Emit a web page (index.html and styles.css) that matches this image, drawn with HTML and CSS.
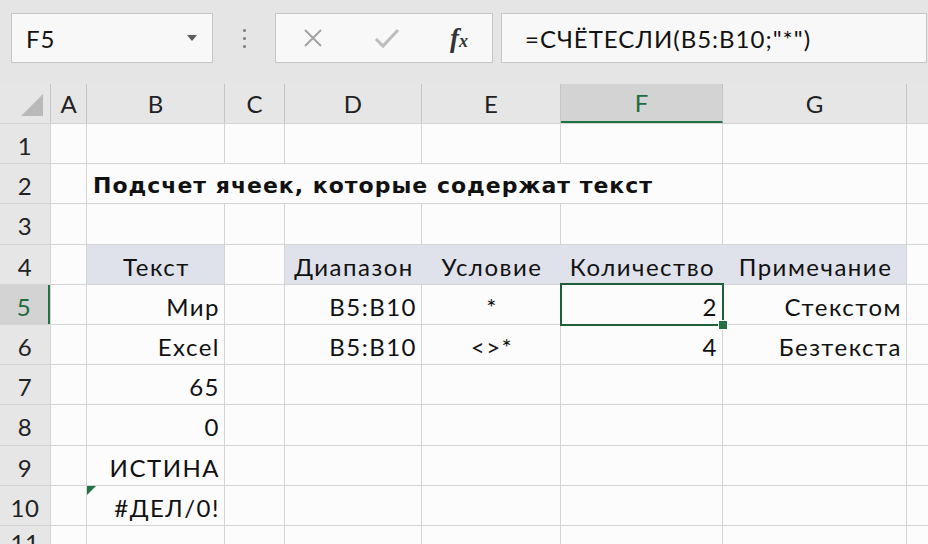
FILE: index.html
```html
<!DOCTYPE html>
<html lang="ru">
<head>
    <meta charset="UTF-8">
    <title>СЧЁТЕСЛИ</title>
    <link rel="stylesheet" href="styles.css">
</head>
<body>
    <!-- Formula bar -->
    <div class="toolbar">
        <div class="namebox">
            <span>F5</span>
            <svg class="caret" width="12" height="8" viewBox="0 0 12 8"><path d="M1 1h10L6 7z" fill="#5a5a5a"/></svg>
        </div>
        <div class="grip"><i></i><i></i><i></i></div>
        <div class="fxbox">
            <svg width="22" height="22" viewBox="0 0 22 22"><path d="M3 3l16 16M19 3L3 19" stroke="#a2a2a2" stroke-width="2" fill="none"/></svg>
            <svg width="26" height="22" viewBox="0 0 26 22"><path d="M2 12l7 7L24 3" stroke="#bdbdbd" stroke-width="3" fill="none"/></svg>
            <span class="fx">f<small>x</small></span>
        </div>
        <div class="formula">=СЧЁТЕСЛИ(B5:B10;&quot;*&quot;)</div>
    </div>

    <!-- Sheet -->
    <div class="sheet">
        <div class="hd corner"><svg width="24" height="24" viewBox="0 0 24 24"><path d="M23 1v22H1z" fill="#b9b9b9"/></svg></div>
        <div class="hd">A</div>
        <div class="hd">B</div>
        <div class="hd">C</div>
        <div class="hd">D</div>
        <div class="hd">E</div>
        <div class="hd active-col">F</div>
        <div class="hd">G</div>
        <div class="hd"></div>

        <div class="rh">1</div>
        <div></div><div></div><div></div><div></div><div></div><div></div><div></div><div></div>

        <div class="rh">2</div>
        <div></div>
        <div class="title">Подсчет ячеек, которые содержат текст</div>
        <div></div><div></div>

        <div class="rh">3</div>
        <div></div><div></div><div></div><div></div><div></div><div></div><div></div><div></div>

        <div class="rh">4</div>
        <div></div>
        <div class="fill c">Текст</div>
        <div></div>
        <div class="fill join c">Диапазон</div>
        <div class="fill join c">Условие</div>
        <div class="fill join c">Количество</div>
        <div class="fill c">Примечание</div>
        <div></div>

        <div class="rh active-row">5</div>
        <div></div>
        <div class="r">Мир</div>
        <div></div>
        <div class="r">B5:B10</div>
        <div class="c">*</div>
        <div class="r selected">2</div>
        <div class="r">Стекстом</div>
        <div></div>

        <div class="rh">6</div>
        <div></div>
        <div class="r">Excel</div>
        <div></div>
        <div class="r">B5:B10</div>
        <div class="c">&lt;&gt;*</div>
        <div class="r">4</div>
        <div class="r">Безтекста</div>
        <div></div>

        <div class="rh">7</div>
        <div></div><div class="r">65</div><div></div><div></div><div></div><div></div><div></div><div></div>

        <div class="rh">8</div>
        <div></div><div class="r">0</div><div></div><div></div><div></div><div></div><div></div><div></div>

        <div class="rh">9</div>
        <div></div><div class="r">ИСТИНА</div><div></div><div></div><div></div><div></div><div></div><div></div>

        <div class="rh">10</div>
        <div></div><div class="r flagged">#ДЕЛ/0!</div><div></div><div></div><div></div><div></div><div></div><div></div>

        <div class="rh">11</div>
        <div></div><div></div><div></div><div></div><div></div><div></div><div></div><div></div>
    </div>
</body>
</html>
```

FILE: styles.css
```css
body {
    margin: 0;
    width: 928px;
    height: 544px;
    overflow: hidden;
    background: #e6e6e6;
    font-family: Lato, "Noto Sans", sans-serif;
    color: #111;
}

/* formula bar */

.toolbar {
    height: 84px;
    display: flex;
    align-items: flex-start;
    padding-top: 13px;
    box-sizing: border-box;
    background: #e5e5e5;
}

.namebox,
.fxbox,
.formula {
    height: 50px;
    box-sizing: border-box;
    background: #f8f8f8;
    border: 1px solid #c6c6c6;
    display: flex;
    align-items: center;
}

.namebox {
    margin-left: 11px;
    width: 202px;
    padding: 0 14px;
    justify-content: space-between;
    font-size: 24px;
    letter-spacing: 1px;
}

.grip {
    width: 62px;
    height: 50px;
    display: flex;
    flex-direction: column;
    align-items: center;
    justify-content: center;
    gap: 5px;
}

.grip i {
    width: 3px;
    height: 3px;
    border-radius: 50%;
    background: #7a7a7a;
}

.fxbox {
    width: 218px;
    padding: 0 24px 0 26px;
    justify-content: space-between;
}

.fx {
    font-family: "Liberation Serif", serif;
    font-style: italic;
    font-weight: bold;
    font-size: 27px;
    color: #333;
}

.fx small {
    font-size: 18px;
}

.formula {
    flex: 1;
    margin-left: 8px;
    margin-right: 1px;
    padding-left: 23px;
    font-size: 24px;
    letter-spacing: 1px;
}

/* sheet */

.sheet {
    display: grid;
    grid-template-columns: 50px 35px 137px 59px 136px 138px 161px 183px 1fr;
    grid-template-rows: 39px 39px 39px 40px 39px 39px 39px 39px 40px 39px 39px 30px;
    gap: 1px;
    background: #d4d4d4;
    font-size: 24px;
    letter-spacing: 1.5px;
}

.sheet > div {
    background: #fcfcfc;
    display: flex;
    align-items: center;
    padding: 3px 4px 0 6px;
    white-space: nowrap;
    min-width: 0;
}

.sheet > .hd {
    background: #e6e6e6;
    justify-content: center;
    color: #222;
    padding: 0;
    letter-spacing: 0;
    border-right: 1px solid #c4c4c4;
    margin-right: -1px;
}

.sheet > .corner {
    justify-content: flex-end;
    align-items: flex-end;
    padding: 0 6px 6px 0;
}

.sheet > .active-col {
    background: #d3d3d3;
    color: #1e6b3e;
    border-bottom: 2px solid #217346;
}

.sheet > .rh {
    background: #e6e6e6;
    justify-content: center;
    color: #222;
    padding: 3px 0 0;
    letter-spacing: 0.5px;
}

.sheet > .active-row {
    background: #d3d3d3;
    color: #1e6b3e;
    border-right: 2px solid #217346;
}

.sheet > .title {
    grid-column: span 5;
    font-family: "DejaVu Sans", sans-serif;
    font-weight: bold;
    font-size: 22px;
    letter-spacing: 1px;
}

.sheet > .fill {
    background: #dfe2ea;
}

.sheet > .join {
    box-shadow: 1px 0 0 #dfe2ea;
}

.sheet > .c {
    justify-content: center;
}

.sheet > .r {
    justify-content: flex-end;
}

.sheet > .selected {
    position: relative;
}

.selected::after {
    content: "";
    position: absolute;
    top: -2px;
    left: -1px;
    right: -2px;
    bottom: -2px;
    border: 2px solid #1e5e3b;
}

.selected::before {
    content: "";
    position: absolute;
    right: -6px;
    bottom: -6px;
    width: 8px;
    height: 8px;
    background: #217346;
    border: 1px solid #fff;
    z-index: 1;
}

.sheet > .flagged {
    position: relative;
}

.flagged::before {
    content: "";
    position: absolute;
    top: 0;
    left: 0;
    border-top: 9px solid #217346;
    border-right: 9px solid transparent;
}
```
